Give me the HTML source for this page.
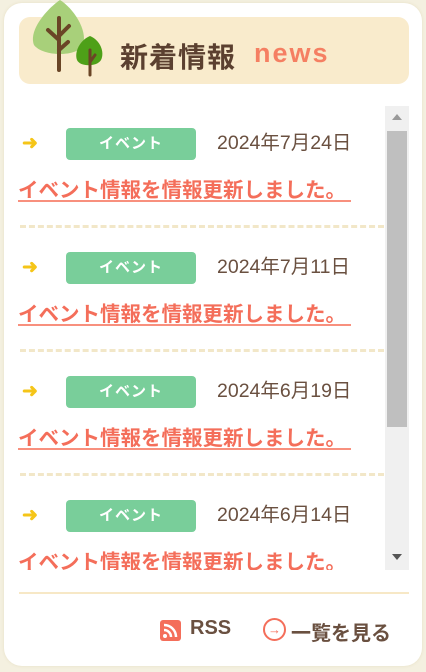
<!DOCTYPE html>
<html><head><meta charset="utf-8"><style>
body{margin:0;width:426px;height:672px;background:#f4f0e0;font-family:"Liberation Sans","Noto Sans CJK JP",sans-serif;overflow:hidden;position:relative}
.card{position:absolute;left:4px;top:3px;width:418px;height:663px;background:#fff;border-radius:18px;box-shadow:0 0 3px #e6dfc4}
.head{position:absolute;left:19px;top:17px;width:390px;height:67px;background:#f9ebcc;border-radius:11px}
.title{position:absolute;left:120px;top:36px;font-size:28px;font-weight:bold;color:#5b4030;letter-spacing:1px}
.news{position:absolute;left:254px;top:38px;font-size:27px;font-weight:bold;color:#f57f62;letter-spacing:2px}
.list{position:absolute;left:18px;top:106px;width:391px;height:464px;overflow:hidden}
.sb{position:absolute;left:367px;top:0;width:24px;height:464px;background:#f0f0f0}
.thumb{position:absolute;left:369px;top:25px;width:20px;height:296px;background:#bfbfbf}
.item{position:absolute;left:0;width:365px;height:124px}
.arr{position:absolute;left:4px;top:12px;color:#f5c518;font-size:19px;font-weight:bold}
.tag{position:absolute;left:48px;top:8px;width:130px;height:32px;background:#79ce9a;border-radius:4px;color:#fff;font-size:15px;font-weight:bold;text-align:center;line-height:32px;letter-spacing:1px}
.date{position:absolute;left:199px;top:6px;font-size:19.5px;color:#6a5040}
.link{position:absolute;left:0;top:60px;font-size:20.5px;font-weight:bold;color:#f46e5a;border-bottom:2px solid #f8907e;padding-right:5px;line-height:21px;height:20px;white-space:nowrap}
.sep{position:absolute;left:2px;top:105px;width:364px;border-top:3px dashed #f2e7c8}
.foot{position:absolute;left:19px;top:592px;width:390px;border-top:2px solid #f7e8c6}
.rss{position:absolute;left:160px;top:620px;width:21px;height:21px;background:#f46e5a;border-radius:3px}
.ft{position:absolute;font-size:20px;font-weight:bold;color:#6a5040;top:617px}
.circ{position:absolute;left:263px;top:618px;width:19px;height:19px;border:2px solid #f46e5a;border-radius:50%;color:#f46e5a;font-size:13px;font-weight:bold;text-align:center;line-height:19px}
</style></head><body>
<div class="card"></div>
<div class="head"></div>
<svg style="position:absolute;left:28px;top:0" width="80" height="78" viewBox="0 0 80 78">
<path d="M32 0 C45 8 60 30 55 45 C50 57 15 57 6 45 C0 30 20 8 32 0Z" fill="#a8d07a"/>
<path d="M31 18 V70 M31 40 L20 30 M31 36 L41 26 M31 50 L40 42" stroke="#6a4526" stroke-width="4" fill="none" stroke-linecap="round"/>
<path d="M62 36 C72 40 77 52 73 60 C69 67 52 67 49 60 C46 52 52 40 62 36Z" fill="#4ea018"/>
<path d="M62 50 V75 M62 62 L67 55" stroke="#6a4526" stroke-width="3" fill="none" stroke-linecap="round"/>
</svg>
<div class="title">新着情報</div>
<div class="news">news</div>
<div class="list">
<div class="item" style="top:14px"><div class="arr">➜</div><div class="tag">イベント</div><div class="date">2024年7月24日</div><div class="link">イベント情報を情報更新しました。</div><div class="sep"></div></div>
<div class="item" style="top:138px"><div class="arr">➜</div><div class="tag">イベント</div><div class="date">2024年7月11日</div><div class="link">イベント情報を情報更新しました。</div><div class="sep"></div></div>
<div class="item" style="top:262px"><div class="arr">➜</div><div class="tag">イベント</div><div class="date">2024年6月19日</div><div class="link">イベント情報を情報更新しました。</div><div class="sep"></div></div>
<div class="item" style="top:386px"><div class="arr">➜</div><div class="tag">イベント</div><div class="date">2024年6月14日</div><div class="link" style="border-bottom:0">イベント情報を情報更新しました。</div></div>
<div class="sb"></div><div class="thumb"></div>
<div style="position:absolute;left:374px;top:8px;border:5px solid transparent;border-bottom:6px solid #999;border-top:0"></div>
<div style="position:absolute;left:374px;top:448px;border:5px solid transparent;border-top:6px solid #555;border-bottom:0"></div>
</div>
<div class="foot"></div>
<div class="rss"><svg width="21" height="21"><circle cx="5" cy="16" r="2" fill="#fff"/><path d="M4 10a7 7 0 0 1 7 7M4 5a12 12 0 0 1 12 12" stroke="#fff" stroke-width="2.5" fill="none"/></svg></div>
<div class="ft" style="left:190px">RSS</div>
<div class="circ">→</div>
<div class="ft" style="left:291px">一覧を見る</div>
</body></html>
